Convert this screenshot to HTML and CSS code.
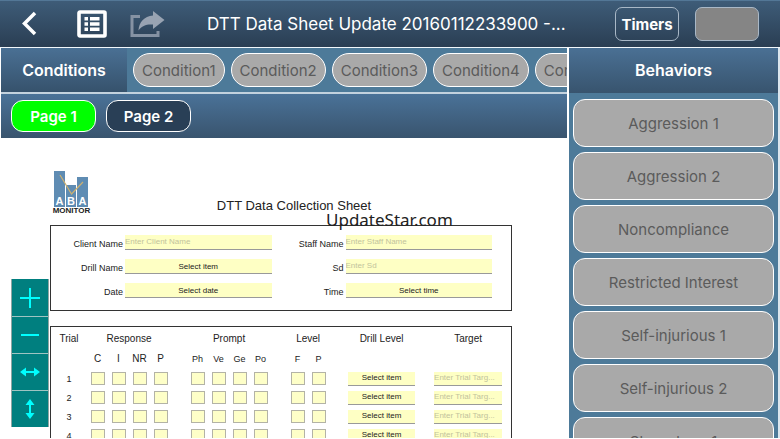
FILE: index.html
```html
<!DOCTYPE html>
<html lang="en">
<head>
<meta charset="utf-8">
<meta name="viewport" content="width=device-width, initial-scale=1">
<title>DTT Data Sheet</title>
<link rel="stylesheet" href="styles.css">
</head>
<body>
<header class="navbar">
  <button class="icon-btn back" aria-label="Back">
    <svg width="16" height="26" viewBox="0 0 16 26"><path d="M14 2 3.500 12.500 14 23" fill="none" stroke="#fff" stroke-width="3.500"/></svg>
  </button>
  <button class="icon-btn list" aria-label="List">
    <svg width="30" height="28" viewBox="0 0 30 28"><rect x="2" y="2" width="26" height="24" rx="1" fill="none" stroke="#fff" stroke-width="3.600"/><path d="M7.500 7h3.500v3.500H7.500zM13 7h9.500v3.500H13zM7.500 12.300h3.500v3.500H7.500zM13 12.300h9.500v3.500H13zM7.500 17.600h3.500v3.500H7.500zM13 17.600h9.500v3.500H13z" fill="#fff"/></svg>
  </button>
  <button class="icon-btn share" aria-label="Share">
    <svg width="36" height="28" viewBox="0 0 36 28"><path d="M11 6.500H3V25.500h26V21" fill="none" stroke="#8592a3" stroke-width="3"/><path d="M24 1 35.500 10 24 19V14.500c-6.500-.5-11 1-14.500 6C10 12 15 6.500 24 5.500z" fill="#98a3b2"/></svg>
  </button>
  <h1 class="navbar-title">DTT Data Sheet Update 20160112233900 -...</h1>
  <button class="nav-btn">Timers</button>
  <button class="nav-btn blank" aria-label="Timer slot" disabled></button>
</header>

<div class="workspace">
  <main class="main">
    <section class="conditions">
      <h2 class="conditions-title">Conditions</h2>
      <div class="chips">
        <button class="chip">Condition1</button>
        <button class="chip">Condition2</button>
        <button class="chip">Condition3</button>
        <button class="chip">Condition4</button>
        <button class="chip">Condition5</button>
      </div>
    </section>
    <nav class="pages">
      <button class="page current">Page 1</button>
      <button class="page">Page 2</button>
    </nav>

    <div class="document">
      <div class="sheet">
        <div class="sheet-head">
          <svg class="logo" width="40" height="44" viewBox="0 0 40 44">
            <path d="M2 1h11v36H2zM14 15h10v22H14zM25 7h11v30H25z" fill="#5f8cb3"/>
            <path d="M8 5 19.500 24 31 12" fill="none" stroke="#cdb070" stroke-width="1.200"/>
            <g class="logo-letters"><text x="7.500" y="35">A</text><text x="19" y="35">B</text><text x="30.500" y="35">A</text></g>
            <text class="logo-name" x="19.500" y="43">MONITOR</text>
          </svg>
          <h2 class="sheet-title">DTT Data Collection Sheet</h2>
        </div>
        <p class="watermark">UpdateStar.com</p>

        <form class="details">
          <label for="client">Client Name</label><input id="client" class="field" placeholder="Enter Client Name">
          <label for="staff">Staff Name</label><input id="staff" class="field" placeholder="Enter Staff Name">
          <label for="drill">Drill Name</label><select id="drill" class="field"><option>Select item</option></select>
          <label for="sd">Sd</label><input id="sd" class="field" placeholder="Enter Sd">
          <label for="date">Date</label><select id="date" class="field"><option>Select date</option></select>
          <label for="time">Time</label><select id="time" class="field"><option>Select time</option></select>
        </form>

        <div class="trials">
          <table>
            <colgroup><col class="c-trial"><col class="c-box" span="4"><col class="c-lead"><col class="c-box" span="3"><col class="c-lead"><col class="c-box"><col class="c-drill"><col class="c-target"></colgroup>
            <thead>
              <tr><th>Trial</th><th colspan="4">Response</th><th colspan="4" class="lead">Prompt</th><th colspan="2" class="lead">Level</th><th class="wide">Drill Level</th><th class="wide last">Target</th></tr>
              <tr><th></th><th>C</th><th>I</th><th>NR</th><th>P</th><th class="lead sub">Ph</th><th class="sub">Ve</th><th class="sub">Ge</th><th class="sub">Po</th><th class="lead sub">F</th><th class="sub">P</th><th></th><th></th></tr>
            </thead>
            <tbody id="rows"></tbody>
          </table>
        </div>
      </div>

      <div class="zoom-tools">
        <button aria-label="Zoom in"><svg width="22" height="22" viewBox="0 0 22 22"><path d="M11 1v20M1 11h20"/></svg></button>
        <button aria-label="Zoom out"><svg width="22" height="22" viewBox="0 0 22 22"><path d="M2 11h18"/></svg></button>
        <button aria-label="Fit width"><svg width="22" height="22" viewBox="0 0 22 22"><path d="M4 11h14"/><path class="tip" d="M1 11 7 6.500v9zM21 11 15 6.500v9z"/></svg></button>
        <button aria-label="Fit height"><svg width="22" height="22" viewBox="0 0 22 22"><path d="M11 4v14"/><path class="tip" d="M11 1 6.500 7h9zM11 21 6.500 15h9z"/></svg></button>
      </div>
    </div>
  </main>

  <aside class="behaviors">
    <h2 class="behaviors-title">Behaviors</h2>
    <div class="behavior-list">
      <button class="behavior">Aggression 1</button>
      <button class="behavior">Aggression 2</button>
      <button class="behavior">Noncompliance</button>
      <button class="behavior">Restricted Interest</button>
      <button class="behavior">Self-injurious 1</button>
      <button class="behavior">Self-injurious 2</button>
      <button class="behavior">Stereotypy 1</button>
    </div>
  </aside>
</div>
<script src="rows.js"></script>
</body>
</html>
```
FILE: styles.css
```css
* { box-sizing: border-box; }

body {
  margin: 0;
  height: 100vh;
  display: flex;
  flex-direction: column;
  overflow: hidden;
  padding-bottom: 1px;
  background: #fff;
  font-family: Inter, "Liberation Sans", sans-serif;
}

h1, h2, p { margin: 0; }

button, input, select { font: inherit; margin: 0; padding: 0; }

/* Top bar */
.navbar {
  flex: none;
  display: flex;
  align-items: center;
  height: 48px;
  padding: 0 21px;
  border-top: 1px solid #537796;
  border-bottom: 1px solid #f2f8fc;
  background: linear-gradient(#3e5c78, #2a3e53);
  color: #fff;
}

.icon-btn { display: flex; border: 0; background: none; }
.list { margin-left: 40px; }
.share { margin-left: 22px; }

.navbar-title {
  flex: 1;
  min-width: 0;
  margin-left: 42px;
  font-size: 17px;
  font-weight: 400;
  line-height: 24px;
  white-space: nowrap;
}

.nav-btn {
  width: 64px;
  height: 34px;
  border: 1px solid #a9b8c7;
  border-radius: 7px;
  background: none;
  color: #fff;
  font-size: 15px;
  font-weight: 700;
}
.nav-btn.blank { margin-left: 16px; background: #858585; }

/* Columns below the bar */
.workspace { flex: 1; min-height: 0; display: flex; }

.main {
  flex: 1;
  min-width: 0;
  display: flex;
  flex-direction: column;
  border-left: 1px solid #fff;
  border-right: 2px solid #fff;
}

.conditions {
  flex: none;
  display: flex;
  height: 46px;
  border-bottom: 2px solid #c3d2de;
  background: #4d7a99;
}

.conditions-title {
  flex: none;
  width: 126px;
  background: linear-gradient(#4a7094, #36526c);
  color: #fff;
  font-size: 16px;
  font-weight: 600;
  line-height: 45px;
  text-align: center;
}

.chips {
  flex: 1;
  min-width: 0;
  display: flex;
  align-items: center;
  gap: 6px;
  padding-left: 6px;
  overflow: hidden;
}

.chip {
  flex: none;
  height: 34px;
  padding: 0 8px;
  border: 1px solid #fff;
  border-radius: 17px;
  background: #a9a9a9;
  color: #5b5b5b;
  font-size: 15px;
}

.pages {
  flex: none;
  display: flex;
  align-items: center;
  gap: 10px;
  height: 44px;
  padding-left: 10px;
  background: linear-gradient(#4a7298, #39546e);
}

.page {
  width: 85px;
  height: 32px;
  border: 1px solid #fff;
  border-radius: 12px;
  background: #293f56;
  color: #fff;
  font-size: 15px;
  font-weight: 600;
}
.page.current { background: #00ff00; }

/* Data sheet */
.document {
  position: relative;
  flex: 1;
  min-height: 0;
  overflow: hidden;
  background: #fff;
  color: #222;
  font-family: "Liberation Sans", Arial, sans-serif;
}

.sheet { position: relative; margin: 0 55px 0 49px; padding-top: 32px; }

.sheet-head { display: flex; align-items: flex-end; padding-left: 2px; }

.logo-letters { fill: #fff; font: 700 11px "Liberation Sans", sans-serif; text-anchor: middle; }
.logo-name { fill: #222; font: 700 8px "Liberation Sans", sans-serif; text-anchor: middle; }

.sheet-title {
  flex: 1;
  padding-right: 16px;
  font-size: 13px;
  font-weight: 400;
  line-height: 16px;
  text-align: center;
}

.watermark {
  position: absolute;
  top: 70px;
  left: 276px;
  color: #222;
  font: 17px/24px "Noto Sans", sans-serif;
}

.details {
  display: grid;
  grid-template-columns: 72px 1fr 70px 1fr;
  gap: 9px 2px;
  margin-top: 11px;
  padding: 9px 19px 12px 0;
  border: 1px solid #333;
}

.details label { height: 15px; padding-top: 2px; font-size: 9px; line-height: 14px; text-align: right; }

.field {
  display: block;
  width: 100%;
  min-width: 0;
  height: 15px;
  border: 0;
  border-bottom: 1px solid #999;
  border-radius: 0;
  outline: 0;
  appearance: none;
  background: #feffc4;
  color: #222;
  font-size: 8px;
}
.field::placeholder { color: #c2c39c; opacity: 1; }
.details input.field { padding-bottom: 2px; }
select.field { text-align: center; text-align-last: center; }

.trials { margin-top: 15px; padding-top: 2px; border: 1px solid #333; border-bottom: 0; }

table { width: 100%; table-layout: fixed; border-collapse: collapse; }
th, td { height: 19px; padding: 0; font-size: 10px; font-weight: 400; line-height: 12px; text-align: center; }
thead th { height: 20px; }
.sub, tbody th { font-size: 9px; }
.lead { padding-left: 16px; }
.wide { padding-left: 19px; }
.last { padding-right: 9px; }

.c-trial { width: 36px; }
.c-box { width: 21px; }
.c-lead { width: 37px; }
.c-drill { width: 86px; }
.c-target { width: 96px; }

.tick {
  display: block;
  width: 14px;
  height: 13px;
  margin: 0 auto;
  appearance: none;
  border: 1px solid #b3b3a6;
  background: #feffc8;
}

td .field { height: 14px; padding-bottom: 2px; }

/* Floating view controls */
.zoom-tools {
  position: absolute;
  top: 141px;
  left: 10px;
  display: flex;
  flex-direction: column;
  width: 38px;
  border: solid #8fa5a3;
  border-width: 0 1px;
}
.zoom-tools button {
  display: flex;
  align-items: center;
  justify-content: center;
  height: 37px;
  border: 0;
  background: #007f7f;
}
.zoom-tools button + button { border-top: 1px solid #9fc4c2; }
.zoom-tools path { fill: none; stroke: #00ffff; stroke-width: 2; }
.zoom-tools .tip { fill: #00ffff; stroke: none; }

/* Behaviors */
.behaviors {
  flex: none;
  width: 211px;
  border-right: 2px solid #dbe6ee;
  overflow: hidden;
  background: #4d7a99;
}

.behaviors-title {
  background: linear-gradient(#4a7094, #38546e);
  color: #fff;
  font-size: 16px;
  font-weight: 600;
  line-height: 45px;
  text-align: center;
}

.behavior-list { display: flex; flex-direction: column; gap: 5px; padding: 6px 4px; }

.behavior {
  flex: none;
  height: 48px;
  border: 1px solid #fff;
  border-radius: 12px;
  background: #a9a9a9;
  color: #5b5b5b;
  font-size: 15px;
}
```
FILE: rows.js
```js
const marks = ["C", "I", "NR", "P", "Ph", "Ve", "Ge", "Po", "F", "P"];
const body = document.getElementById("rows");

for (let trial = 1; trial <= 10; trial++) {
  const boxes = marks.map((mark, i) =>
    `<td class="${i === 4 || i === 8 ? "lead" : ""}"><input type="checkbox" class="tick" aria-label="Trial ${trial} ${mark}"></td>`
  ).join("");
  body.insertAdjacentHTML("beforeend",
    `<tr><th>${trial}</th>${boxes}
      <td class="wide"><select class="field" aria-label="Drill level ${trial}"><option>Select item</option></select></td>
      <td class="wide last"><input class="field" aria-label="Target ${trial}" placeholder="Enter Trial Targ..."></td></tr>`);
}
```
